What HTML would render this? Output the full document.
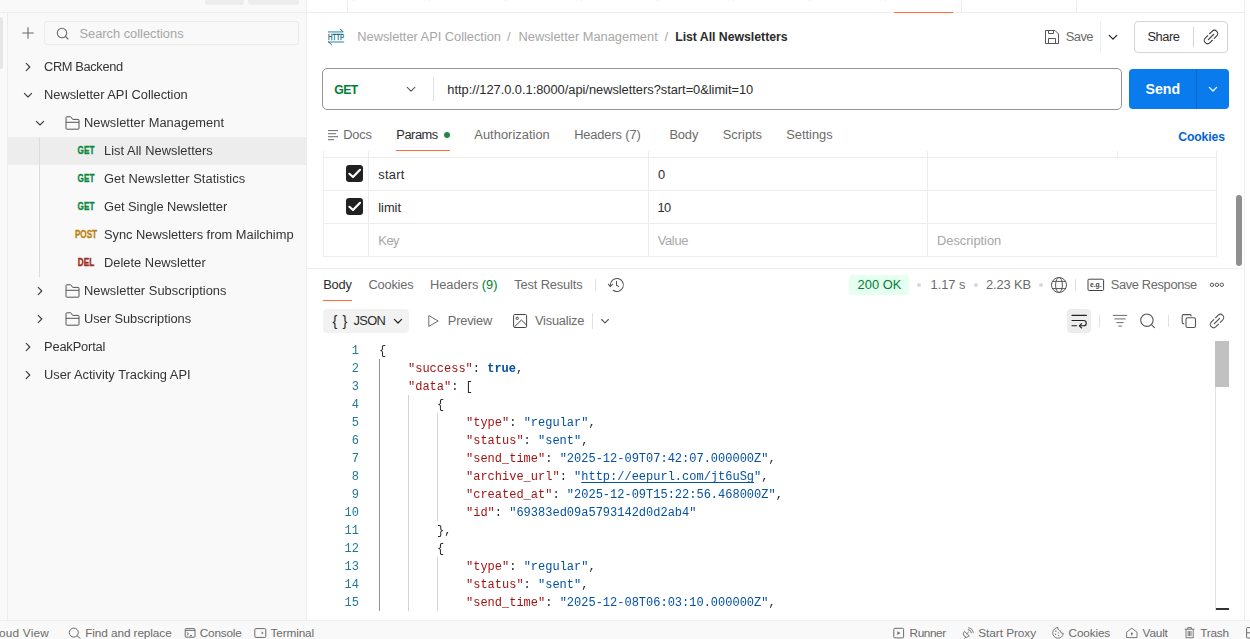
<!DOCTYPE html>
<html><head><meta charset="utf-8"><title>Postman</title>
<style>
*{box-sizing:border-box;margin:0;padding:0}
html,body{width:1250px;height:639px;overflow:hidden;background:#fff}
body{font-family:"Liberation Sans",sans-serif;font-size:12.85px;color:#2b2b2b;position:relative}
.a{position:absolute}
.t{position:absolute;white-space:pre;line-height:16px;height:16px}
.sr{color:#333;will-change:transform}
.g{color:#6b6b6b}
.ph{color:#a6a6a6}
svg{position:absolute;overflow:visible}
.ic{fill:none;stroke:#6b6b6b;stroke-width:1;stroke-linecap:round;stroke-linejoin:round}
.m{font-weight:700;font-size:10.2px;text-align:center;width:30px;left:71px;transform:scaleX(.8);-webkit-text-stroke:.35px currentColor}
.code{font-family:"Liberation Mono",monospace;font-size:12px}
.code .t{line-height:18px;height:18px;will-change:transform}
.k{color:#a31515}.s{color:#0451a5}.ln{color:#237893;text-align:right;width:30px;left:328px}
.sb .t{font-size:11.8px;color:#6b6b6b}
</style></head><body>
<!-- SIDEBAR -->
<div class="a side" style="left:0;top:0;width:307px;height:621px;background:#f9f9f9;border-right:1px solid #ededed"></div>
<div class="a" style="left:7px;top:12px;width:1px;height:609px;background:#ededed"></div>
<div class="a" style="left:0;top:12px;width:1245px;height:1px;background:#ededed"></div>
<div class="a" style="left:0;top:17px;width:3px;height:52px;background:#e6e6e6;border-radius:0 3px 3px 0"></div>
<div class="a" style="left:205px;top:0;width:39px;height:5px;background:#ededed;border-radius:0 0 3px 3px"></div>
<div class="a" style="left:248px;top:0;width:51px;height:5px;background:#ededed;border-radius:0 0 3px 3px"></div>
<svg style="left:22px;top:27px" width="12" height="12" viewBox="0 0 12 12" ><path d="M6 .3V11.7M.3 6H11.7" stroke="#6b6b6b" stroke-width="1.1" fill="none"/></svg>
<div class="a" style="left:44px;top:21px;width:255px;height:24px;border:1px solid #ebebeb;border-radius:3px;background:#f9f9f9"></div>
<svg style="left:56px;top:27px" width="13" height="13" viewBox="0 0 13 13" ><circle cx="6" cy="6" r="4.7" fill="none" stroke="#6b6b6b" stroke-width="1.1"/><path d="M9.5 9.5 L12 12" stroke="#6b6b6b" stroke-width="1.1" stroke-linecap="round"/></svg>
<div class="t ph" style="left:79.5px;top:25.6px;letter-spacing:-0.01px">Search collections</div>
<div class="a" style="left:8px;top:137px;width:298px;height:28px;background:#ededed"></div>
<div class="a" style="left:39px;top:137px;width:1px;height:140px;background:#dcdcdc"></div>
<svg style="left:20px;top:59px" width="16" height="16" viewBox="0 0 16 16" ><path d="M6.2 4.4 L9.8 8 L6.2 11.6" fill="none" stroke="#3b3b3b" stroke-width="1.1" stroke-linecap="round" stroke-linejoin="round"/></svg>
<div class="t sr" style="left:44.3px;top:59.0px;letter-spacing:-0.37px">CRM Backend</div>
<svg style="left:20px;top:87px" width="16" height="16" viewBox="0 0 16 16" ><path d="M4.4 6.4 L8 10.0 L11.6 6.4" fill="none" stroke="#3b3b3b" stroke-width="1.1" stroke-linecap="round" stroke-linejoin="round"/></svg>
<div class="t sr" style="left:44.3px;top:87.0px;letter-spacing:-0.02px">Newsletter API Collection</div>
<svg style="left:32px;top:115px" width="16" height="16" viewBox="0 0 16 16" ><path d="M4.4 6.4 L8 10.0 L11.6 6.4" fill="none" stroke="#3b3b3b" stroke-width="1.1" stroke-linecap="round" stroke-linejoin="round"/></svg>
<svg style="left:64.5px;top:116px" width="15" height="14" viewBox="0 0 15 14" ><path d="M1 12.5 V1.5 Q1 .8 1.7 .8 H5.6 Q6.1 .8 6.4 1.3 L7.3 3 Q7.5 3.4 8 3.4 H13.3 Q14 3.4 14 4.1 V12.5 Q14 13.2 13.3 13.2 H1.7 Q1 13.2 1 12.5 Z M1 6.3 H14" fill="none" stroke="#555" stroke-width="1" stroke-linejoin="round"/></svg>
<div class="t sr" style="left:84px;top:115.0px;letter-spacing:0.04px">Newsletter Management</div>
<div class="t m" style="left:71px;top:143.0px;color:#0a8a3c;">GET</div>
<div class="t sr" style="left:104.3px;top:143.0px;letter-spacing:0.05px">List All Newsletters</div>
<div class="t m" style="left:71px;top:171.0px;color:#0a8a3c;">GET</div>
<div class="t sr" style="left:104.3px;top:171.0px;letter-spacing:0.05px">Get Newsletter Statistics</div>
<div class="t m" style="left:71px;top:199.0px;color:#0a8a3c;">GET</div>
<div class="t sr" style="left:104.3px;top:199.0px;letter-spacing:-0.05px">Get Single Newsletter</div>
<div class="t m" style="left:71px;top:227.0px;color:#bd8210;">POST</div>
<div class="t sr" style="left:104.3px;top:227.0px;letter-spacing:-0.01px">Sync Newsletters from Mailchimp</div>
<div class="t m" style="left:71px;top:255.0px;color:#a02a22;">DEL</div>
<div class="t sr" style="left:104.3px;top:255.0px;letter-spacing:0.02px">Delete Newsletter</div>
<svg style="left:32px;top:283px" width="16" height="16" viewBox="0 0 16 16" ><path d="M6.2 4.4 L9.8 8 L6.2 11.6" fill="none" stroke="#3b3b3b" stroke-width="1.1" stroke-linecap="round" stroke-linejoin="round"/></svg>
<svg style="left:64.5px;top:284px" width="15" height="14" viewBox="0 0 15 14" ><path d="M1 12.5 V1.5 Q1 .8 1.7 .8 H5.6 Q6.1 .8 6.4 1.3 L7.3 3 Q7.5 3.4 8 3.4 H13.3 Q14 3.4 14 4.1 V12.5 Q14 13.2 13.3 13.2 H1.7 Q1 13.2 1 12.5 Z M1 6.3 H14" fill="none" stroke="#555" stroke-width="1" stroke-linejoin="round"/></svg>
<div class="t sr" style="left:84px;top:283.0px;letter-spacing:0.05px">Newsletter Subscriptions</div>
<svg style="left:32px;top:311px" width="16" height="16" viewBox="0 0 16 16" ><path d="M6.2 4.4 L9.8 8 L6.2 11.6" fill="none" stroke="#3b3b3b" stroke-width="1.1" stroke-linecap="round" stroke-linejoin="round"/></svg>
<svg style="left:64.5px;top:312px" width="15" height="14" viewBox="0 0 15 14" ><path d="M1 12.5 V1.5 Q1 .8 1.7 .8 H5.6 Q6.1 .8 6.4 1.3 L7.3 3 Q7.5 3.4 8 3.4 H13.3 Q14 3.4 14 4.1 V12.5 Q14 13.2 13.3 13.2 H1.7 Q1 13.2 1 12.5 Z M1 6.3 H14" fill="none" stroke="#555" stroke-width="1" stroke-linejoin="round"/></svg>
<div class="t sr" style="left:84px;top:311.0px;letter-spacing:-0.04px">User Subscriptions</div>
<svg style="left:20px;top:339px" width="16" height="16" viewBox="0 0 16 16" ><path d="M6.2 4.4 L9.8 8 L6.2 11.6" fill="none" stroke="#3b3b3b" stroke-width="1.1" stroke-linecap="round" stroke-linejoin="round"/></svg>
<div class="t sr" style="left:44.3px;top:339.0px;letter-spacing:-0.16px">PeakPortal</div>
<svg style="left:20px;top:367px" width="16" height="16" viewBox="0 0 16 16" ><path d="M6.2 4.4 L9.8 8 L6.2 11.6" fill="none" stroke="#3b3b3b" stroke-width="1.1" stroke-linecap="round" stroke-linejoin="round"/></svg>
<div class="t sr" style="left:44.3px;top:367.0px;letter-spacing:0.01px">User Activity Tracking API</div>

<!-- MAIN -->
<div class="a" style="left:347px;top:0px;width:1px;height:12px;background:#ededed"></div>
<div class="a" style="left:353px;top:0px;width:1px;height:1px;background:#e6e6e6"></div>
<div class="a" style="left:429px;top:0px;width:1px;height:1px;background:#e6e6e6"></div>
<div class="a" style="left:505px;top:0px;width:1px;height:1px;background:#e6e6e6"></div>
<div class="a" style="left:581px;top:0px;width:1px;height:1px;background:#e6e6e6"></div>
<div class="a" style="left:657px;top:0px;width:1px;height:1px;background:#e6e6e6"></div>
<div class="a" style="left:733px;top:0px;width:1px;height:1px;background:#e6e6e6"></div>
<div class="a" style="left:809px;top:0px;width:1px;height:1px;background:#e6e6e6"></div>
<div class="a" style="left:885px;top:0px;width:1px;height:1px;background:#e6e6e6"></div>
<div class="a" style="left:961px;top:0px;width:1px;height:12px;background:#ededed"></div>
<div class="a" style="left:1076px;top:0px;width:1px;height:12px;background:#ededed"></div>
<div class="a" style="left:894px;top:12px;width:59px;height:1px;background:#ff6c37"></div>
<div class="a" style="left:1244px;top:0px;width:1px;height:620px;background:#ededed"></div>
<svg style="left:327px;top:28px" width="19" height="18" viewBox="0 0 19 18" ><g fill="none" stroke="#7bbac3" stroke-width="1.7"><path d="M1 3.9 H16.2"/><path d="M17.2 14 H1"/></g><g fill="none" stroke="#1a6a94" stroke-width="1" stroke-linecap="round"><path d="M13.3 1.1 L16 3.8"/><path d="M1.6 13.9 L4.6 16.8"/></g><text x="1" y="11.9" font-family="Liberation Sans, sans-serif" font-size="8.6" font-weight="400" fill="#0d5f8c" stroke="#0d5f8c" stroke-width=".3" textLength="16.2" lengthAdjust="spacingAndGlyphs">HTTP</text></svg>
<div class="t " style="left:357.3px;top:29.0px;color:#a6a6a6;letter-spacing:-0.02px">Newsletter API Collection</div>
<div class="t " style="left:507px;top:29.0px;color:#a6a6a6;">/</div>
<div class="t " style="left:518.5px;top:29.0px;color:#a6a6a6;letter-spacing:0.00px">Newsletter Management</div>
<div class="t " style="left:664.5px;top:29.0px;color:#a6a6a6;">/</div>
<div class="t " style="left:675.2px;top:29.0px;font-weight:700;font-size:12.3px;letter-spacing:-0.03px">List All Newsletters</div>
<svg style="left:1044px;top:29px" width="16" height="16" viewBox="0 0 16 16" ><path d="M1.5 1.5 H11 L14.5 5 V14.5 H1.5 Z M4.5 1.5 V4.5 H9.5 V1.5 M4.5 14.5 V9.5 H11.5 V14.5" fill="none" stroke="#555" stroke-width="1" stroke-linejoin="round"/></svg>
<div class="t g" style="left:1065.7px;top:29.0px;letter-spacing:-0.50px">Save</div>
<div class="a" style="left:1100px;top:21px;width:1px;height:32px;background:#ededed"></div>
<svg style="left:1104.8px;top:29px" width="16" height="16" viewBox="0 0 16 16" ><path d="M4.2 6.3 L8 10.1 L11.8 6.3" fill="none" stroke="#212121" stroke-width="1.2" stroke-linecap="round" stroke-linejoin="round"/></svg>
<div class="a" style="left:1134px;top:21px;width:94px;height:32px;border:1px solid #d4d4d4;border-radius:4px;background:#fff"></div>
<div class="t " style="left:1147.5px;top:29.0px;letter-spacing:-0.46px">Share</div>
<div class="a" style="left:1193px;top:27px;width:1px;height:20px;background:#d4d4d4"></div>
<svg style="left:1202px;top:28px" width="18" height="18" viewBox="0 0 18 18" ><g transform="translate(9 9) rotate(-45)" fill="none" stroke="#3b3b3b" stroke-width="1.1" stroke-linecap="round"><path d="M1.3 -3.3 H4.8 A3.3 3.3 0 0 1 4.8 3.3 H1.3 M-1.3 3.3 H-4.8 A3.3 3.3 0 0 1 -4.8 -3.3 H-1.3"/><path d="M-3.7 0 H3.7" stroke-width="1.3"/></g></svg>
<div class="a" style="left:322px;top:68px;width:800px;height:42px;border:1px solid #949494;border-radius:5px;background:#fff"></div>
<div class="t " style="left:334.3px;top:82.0px;font-weight:700;font-size:12.2px;color:#007f31;letter-spacing:-0.52px">GET</div>
<svg style="left:403.2px;top:81.3px" width="16" height="16" viewBox="0 0 16 16" ><path d="M4.1 6.25 L8 10.149999999999999 L11.9 6.25" fill="none" stroke="#4a4a4a" stroke-width="1.05" stroke-linecap="round" stroke-linejoin="round"/></svg>
<div class="a" style="left:433px;top:77px;width:1px;height:24px;background:#e0e0e0"></div>
<div class="t " style="left:447.3px;top:82.0px;letter-spacing:-0.02px">http://127.0.0.1:8000/api/newsletters?start=0&amp;limit=10</div>
<div class="a" style="left:1129px;top:69px;width:100px;height:40px;background:#097bed;border-radius:4px"></div>
<div class="a" style="left:1196px;top:69px;width:1px;height:40px;background:#0a68c9"></div>
<div class="t " style="left:1145.6px;top:81.0px;font-weight:700;font-size:14.2px;color:#fff;letter-spacing:-0.07px">Send</div>
<svg style="left:1205px;top:81.3px" width="16" height="16" viewBox="0 0 16 16" ><path d="M4.4 6.4 L8 10.0 L11.6 6.4" fill="none" stroke="#fff" stroke-width="1.3" stroke-linecap="round" stroke-linejoin="round"/></svg>
<svg style="left:327px;top:129px" width="12" height="12" viewBox="0 0 12 12" ><path d="M1 1.6 H11 M1 4.7 H9 M1 7.7 H11 M1 10.7 H7" stroke="#6b6b6b" stroke-width="1" fill="none"/></svg>
<div class="t g" style="left:343.3px;top:127.0px;letter-spacing:-0.24px">Docs</div>
<div class="t " style="left:396.3px;top:127.0px;letter-spacing:-0.46px">Params</div>
<div class="a" style="left:443.8px;top:132px;width:6px;height:6px;background:#1f8a48;border-radius:3px"></div>
<div class="a" style="left:396px;top:149.5px;width:54px;height:1.5px;background:#ff6c37"></div>
<div class="t g" style="left:474.3px;top:127.0px;letter-spacing:0.04px">Authorization</div>
<div class="t g" style="left:574.2px;top:127.0px;letter-spacing:-0.13px">Headers (7)</div>
<div class="t g" style="left:669.4px;top:127.0px;letter-spacing:-0.12px">Body</div>
<div class="t g" style="left:722.8px;top:127.0px;letter-spacing:-0.01px">Scripts</div>
<div class="t g" style="left:786.2px;top:127.0px;letter-spacing:-0.00px">Settings</div>
<div class="t " style="left:1178.2px;top:129.0px;font-weight:700;font-size:12.2px;color:#0265d2;letter-spacing:-0.09px">Cookies</div>
<div class="a" style="left:323px;top:151px;width:1px;height:106px;background:#ededed"></div>
<div class="a" style="left:368px;top:151px;width:1px;height:106px;background:#ededed"></div>
<div class="a" style="left:648px;top:151px;width:1px;height:106px;background:#ededed"></div>
<div class="a" style="left:927px;top:151px;width:1px;height:106px;background:#ededed"></div>
<div class="a" style="left:1117px;top:151px;width:1px;height:6px;background:#ededed"></div>
<div class="a" style="left:1216px;top:151px;width:1px;height:106px;background:#ededed"></div>
<div class="a" style="left:323px;top:157px;width:894px;height:1px;background:#ededed"></div>
<div class="a" style="left:323px;top:190px;width:894px;height:1px;background:#ededed"></div>
<div class="a" style="left:323px;top:223px;width:894px;height:1px;background:#ededed"></div>
<div class="a" style="left:323px;top:256px;width:894px;height:1px;background:#ededed"></div>
<svg style="left:346.0px;top:165.0px" width="17" height="17" viewBox="0 0 17 17" ><rect x="0" y="0" width="17" height="17" rx="3.2" fill="#212121"/><path d="M3.4 8.8 L7 12 L14 4.8" fill="none" stroke="#fff" stroke-width="2.2" stroke-linecap="round" stroke-linejoin="round"/></svg>
<svg style="left:346.0px;top:198.0px" width="17" height="17" viewBox="0 0 17 17" ><rect x="0" y="0" width="17" height="17" rx="3.2" fill="#212121"/><path d="M3.4 8.8 L7 12 L14 4.8" fill="none" stroke="#fff" stroke-width="2.2" stroke-linecap="round" stroke-linejoin="round"/></svg>
<div class="t " style="left:378.3px;top:167.0px;letter-spacing:0.24px">start</div>
<div class="t " style="left:378.3px;top:200.0px;letter-spacing:-0.03px">limit</div>
<div class="t " style="left:658px;top:167.0px;">0</div>
<div class="t " style="left:657.5px;top:200.0px;letter-spacing:-0.60px">10</div>
<div class="t ph" style="left:378.3px;top:233.0px;letter-spacing:-0.48px">Key</div>
<div class="t ph" style="left:657.8px;top:233.0px;letter-spacing:-0.34px">Value</div>
<div class="t ph" style="left:937px;top:233.0px;letter-spacing:-0.00px">Description</div>
<div class="a" style="left:1236px;top:195px;width:6px;height:71px;background:#8f8f8f;border-radius:3px"></div>
<div class="a" style="left:307px;top:268px;width:937px;height:1px;background:#ededed"></div>
<div class="t " style="left:323.2px;top:276.6px;letter-spacing:-0.17px">Body</div>
<div class="a" style="left:323px;top:299.5px;width:29px;height:1.5px;background:#ff6c37"></div>
<div class="t g" style="left:368.4px;top:276.6px;letter-spacing:-0.19px">Cookies</div>
<div class="t g" style="left:430px;top:276.6px;letter-spacing:-0.04px">Headers <span style="color:#007f31">(9)</span></div>
<div class="t g" style="left:514.3px;top:276.6px;letter-spacing:-0.15px">Test Results</div>
<div class="a" style="left:595px;top:279px;width:1px;height:12px;background:#e0e0e0"></div>
<svg style="left:608px;top:277px" width="17" height="16" viewBox="0 0 17 16" ><g fill="none" stroke="#555" stroke-width="1.05" stroke-linecap="round" stroke-linejoin="round"><path d="M2.4 8.4 A6.5 6.5 0 1 1 5.2 13.3"/><path d="M.4 7.2 L2.3 9.6 L4.5 7.2"/><path d="M8.5 4.3 V8.3 L10.8 9.6"/></g></svg>
<div class="a" style="left:848.5px;top:275px;width:60.5px;height:20px;background:#e5fff1;border-radius:3px"></div>
<div class="t " style="left:857.6px;top:276.6px;font-size:12.9px;color:#007f31;letter-spacing:-0.00px">200 OK</div>
<div class="a" style="left:917.3px;top:283.2px;width:3.4px;height:3.4px;background:#d9d9d9;border-radius:2px"></div>
<div class="a" style="left:974.3px;top:283.2px;width:3.4px;height:3.4px;background:#d9d9d9;border-radius:2px"></div>
<div class="a" style="left:1039.3px;top:283.2px;width:3.4px;height:3.4px;background:#d9d9d9;border-radius:2px"></div>
<div class="t g" style="left:930.5px;top:276.6px;letter-spacing:0.00px">1.17 s</div>
<div class="t g" style="left:986px;top:276.6px;letter-spacing:-0.10px">2.23 KB</div>
<svg style="left:1050px;top:276px" width="18" height="18" viewBox="0 0 18 18" ><g fill="none" stroke="#555" stroke-width="1"><circle cx="9" cy="9" r="7.5"/><ellipse cx="9" cy="9" rx="3.4" ry="7.5"/><path d="M2.6 5.4 H15.4 M2.6 12.6 H15.4"/></g></svg>
<div class="a" style="left:1075px;top:279px;width:1px;height:12px;background:#e0e0e0"></div>
<svg style="left:1087px;top:278px" width="18" height="14" viewBox="0 0 18 14" ><rect x="1" y="1.2" width="15.6" height="11.3" rx="1" fill="none" stroke="#444" stroke-width="1"/><text x="3" y="9.4" font-family="Liberation Sans, sans-serif" font-size="6.6" font-weight="700" fill="#444" textLength="11.6" lengthAdjust="spacingAndGlyphs">e.g.</text></svg>
<div class="t g" style="left:1110.8px;top:276.6px;letter-spacing:-0.36px">Save Response</div>
<svg style="left:1208px;top:281px" width="18" height="8" viewBox="0 0 18 8" ><g fill="none" stroke="#555" stroke-width="1"><circle cx="4" cy="3.8" r="1.7"/><circle cx="8.9" cy="3.8" r="1.7"/><circle cx="13.8" cy="3.8" r="1.7"/></g></svg>
<div class="a" style="left:323px;top:309px;width:86px;height:24px;background:#f2f2f2;border-radius:4px"></div>
<div class="t " style="left:332.4px;top:313.0px;font-size:14.5px;letter-spacing:0.56px">{ }</div>
<div class="t " style="left:353.4px;top:313.0px;letter-spacing:-0.60px">JSON</div>
<svg style="left:389.5px;top:312.8px" width="16" height="16" viewBox="0 0 16 16" ><path d="M4.4 6.4 L8 10.0 L11.6 6.4" fill="none" stroke="#212121" stroke-width="1.2" stroke-linecap="round" stroke-linejoin="round"/></svg>
<svg style="left:427px;top:314px" width="13" height="14" viewBox="0 0 13 14" ><path d="M1.8 1.6 L11.2 7 L1.8 12.4 Z" fill="none" stroke="#6b6b6b" stroke-width="1" stroke-linejoin="round"/></svg>
<div class="t g" style="left:447.8px;top:313.0px;letter-spacing:-0.21px">Preview</div>
<svg style="left:512px;top:313px" width="16" height="16" viewBox="0 0 16 16" ><g fill="none" stroke="#444" stroke-width="1" stroke-linejoin="round"><rect x="1.6" y="1.5" width="13" height="13" rx="1.2"/><circle cx="5.2" cy="5.3" r="1.2"/><path d="M2.4 13.9 L9.4 7 L14.6 12.2"/></g></svg>
<div class="t g" style="left:535px;top:313.0px;letter-spacing:-0.22px">Visualize</div>
<div class="a" style="left:592px;top:313px;width:1px;height:16px;background:#e0e0e0"></div>
<svg style="left:596.8px;top:312.8px" width="16" height="16" viewBox="0 0 16 16" ><path d="M4.6 6.5 L8 9.899999999999999 L11.4 6.5" fill="none" stroke="#555" stroke-width="1.1" stroke-linecap="round" stroke-linejoin="round"/></svg>
<div class="a" style="left:1067px;top:309px;width:24px;height:24px;background:#ededed;border-radius:4px"></div>
<svg style="left:1070px;top:312px" width="18" height="18" viewBox="0 0 18 18" ><g fill="none" stroke="#212121" stroke-width="1.1" stroke-linecap="round" stroke-linejoin="round"><path d="M2 3.4 H16.4"/><path d="M2 8.5 H13.6 A2.6 2.6 0 0 1 13.6 13.8 H9.6"/><path d="M11.6 11.6 L9.4 13.8 L11.6 16"/><path d="M2 13.8 H6.6"/></g></svg>
<div class="a" style="left:1099px;top:315px;width:1px;height:12px;background:#e0e0e0"></div>
<svg style="left:1112px;top:312px" width="16" height="16" viewBox="0 0 16 16" ><path d="M.8 3.4 H15.2 M2.4 6.9 H13.6 M4.5 10.6 H11.5 M6.4 14.1 H9.9" stroke="#6b6b6b" stroke-width="1" fill="none"/></svg>
<svg style="left:1139px;top:312px" width="18" height="18" viewBox="0 0 18 18" ><circle cx="7.9" cy="8.2" r="6.2" fill="none" stroke="#555" stroke-width="1.1"/><path d="M12.4 12.7 L15.4 15.6" stroke="#555" stroke-width="1.1" stroke-linecap="round"/></svg>
<div class="a" style="left:1168px;top:315px;width:1px;height:12px;background:#e0e0e0"></div>
<svg style="left:1181px;top:313px" width="16" height="16" viewBox="0 0 16 16" ><g fill="none" stroke="#555" stroke-width="1.1" stroke-linejoin="round"><rect x="5" y="4.8" width="9.5" height="9.7" rx="1.6"/><path d="M3.2 10.6 H2.6 Q1.2 10.6 1.2 9.2 V3 Q1.2 1.6 2.6 1.6 H8.8 Q10.2 1.6 10.2 3 V3.2"/></g></svg>
<svg style="left:1208px;top:312px" width="18" height="18" viewBox="0 0 18 18" ><g transform="translate(9 9) rotate(-45)" fill="none" stroke="#555" stroke-width="1.1" stroke-linecap="round"><path d="M1.3 -3.3 H4.8 A3.3 3.3 0 0 1 4.8 3.3 H1.3 M-1.3 3.3 H-4.8 A3.3 3.3 0 0 1 -4.8 -3.3 H-1.3"/><path d="M-3.7 0 H3.7" stroke-width="1.3"/></g></svg>
<div class="code">
<div class="a" style="left:379px;top:359px;width:1px;height:252px;background:#939393"></div>
<div class="a" style="left:408px;top:395px;width:1px;height:216px;background:#d3d3d3"></div>
<div class="a" style="left:437px;top:413px;width:1px;height:108px;background:#d3d3d3"></div>
<div class="a" style="left:437px;top:557px;width:1px;height:54px;background:#d3d3d3"></div>
<div class="t ln" style="left:328.6px;top:342.0px;">1</div>
<div class="t " style="left:379.3px;top:342.0px;">{</div>
<div class="t ln" style="left:328.6px;top:360.0px;">2</div>
<div class="t " style="left:408.1px;top:360.0px;"><span class="k">&quot;success&quot;</span>: <span class="s" style="font-weight:700">true</span>,</div>
<div class="t ln" style="left:328.6px;top:378.0px;">3</div>
<div class="t " style="left:408.1px;top:378.0px;"><span class="k">&quot;data&quot;</span>: [</div>
<div class="t ln" style="left:328.6px;top:396.0px;">4</div>
<div class="t " style="left:436.90000000000003px;top:396.0px;">{</div>
<div class="t ln" style="left:328.6px;top:414.0px;">5</div>
<div class="t " style="left:465.70000000000005px;top:414.0px;"><span class="k">&quot;type&quot;</span>: <span class="s">&quot;regular&quot;</span>,</div>
<div class="t ln" style="left:328.6px;top:432.0px;">6</div>
<div class="t " style="left:465.70000000000005px;top:432.0px;"><span class="k">&quot;status&quot;</span>: <span class="s">&quot;sent&quot;</span>,</div>
<div class="t ln" style="left:328.6px;top:450.0px;">7</div>
<div class="t " style="left:465.70000000000005px;top:450.0px;"><span class="k">&quot;send_time&quot;</span>: <span class="s">&quot;2025-12-09T07:42:07.000000Z&quot;</span>,</div>
<div class="t ln" style="left:328.6px;top:468.0px;">8</div>
<div class="t " style="left:465.70000000000005px;top:468.0px;"><span class="k">&quot;archive_url&quot;</span>: <span class="s">&quot;<span style="text-decoration:underline;text-underline-offset:2px">http://eepurl.com/jt6uSg</span>&quot;</span>,</div>
<div class="t ln" style="left:328.6px;top:486.0px;">9</div>
<div class="t " style="left:465.70000000000005px;top:486.0px;"><span class="k">&quot;created_at&quot;</span>: <span class="s">&quot;2025-12-09T15:22:56.468000Z&quot;</span>,</div>
<div class="t ln" style="left:328.6px;top:504.0px;">10</div>
<div class="t " style="left:465.70000000000005px;top:504.0px;"><span class="k">&quot;id&quot;</span>: <span class="s">&quot;69383ed09a5793142d0d2ab4&quot;</span></div>
<div class="t ln" style="left:328.6px;top:522.0px;">11</div>
<div class="t " style="left:436.90000000000003px;top:522.0px;">},</div>
<div class="t ln" style="left:328.6px;top:540.0px;">12</div>
<div class="t " style="left:436.90000000000003px;top:540.0px;">{</div>
<div class="t ln" style="left:328.6px;top:558.0px;">13</div>
<div class="t " style="left:465.70000000000005px;top:558.0px;"><span class="k">&quot;type&quot;</span>: <span class="s">&quot;regular&quot;</span>,</div>
<div class="t ln" style="left:328.6px;top:576.0px;">14</div>
<div class="t " style="left:465.70000000000005px;top:576.0px;"><span class="k">&quot;status&quot;</span>: <span class="s">&quot;sent&quot;</span>,</div>
<div class="t ln" style="left:328.6px;top:594.0px;">15</div>
<div class="t " style="left:465.70000000000005px;top:594.0px;"><span class="k">&quot;send_time&quot;</span>: <span class="s">&quot;2025-12-08T06:03:10.000000Z&quot;</span>,</div>
</div>
<div class="a" style="left:1215px;top:341px;width:1px;height:270px;background:#e0e0e0"></div>
<div class="a" style="left:1215px;top:341px;width:14px;height:46px;background:#c1c1c1"></div>
<div class="a" style="left:1216px;top:608px;width:13px;height:2px;background:#333"></div>

<!-- STATUS BAR -->
<div class="a sb" style="left:0;top:620px;width:1250px;height:19px;background:#f9f9f9;border-top:1px solid #ededed"></div>
<div class="sb">
<div class="t sbt" style="left:-12.6px;top:624.5px;letter-spacing:0.21px">Cloud View</div>
<svg style="left:68px;top:627px" width="14" height="13" viewBox="0 0 14 13" ><circle cx="5.8" cy="5.6" r="4.5" fill="none" stroke="#6b6b6b" stroke-width="1"/><path d="M9.1 8.9 L12 11.2" stroke="#6b6b6b" stroke-width="1" stroke-linecap="round"/></svg>
<div class="t sbt" style="left:85.2px;top:624.5px;letter-spacing:-0.09px">Find and replace</div>
<svg style="left:184px;top:627px" width="13" height="12" viewBox="0 0 13 12" ><g fill="none" stroke="#6b6b6b" stroke-width="1"><rect x="1.2" y="1.6" width="9.8" height="8.6" rx=".8"/><path d="M1.2 3.4 H11 M2.8 5.4 L4.6 6.9 L2.8 8.4 M5.8 8.6 H8"/></g></svg>
<div class="t sbt" style="left:199.8px;top:624.5px;letter-spacing:-0.21px">Console</div>
<svg style="left:254px;top:627px" width="13" height="12" viewBox="0 0 13 12" ><g fill="none" stroke="#6b6b6b" stroke-width="1"><rect x=".8" y="1.6" width="11" height="8.8" rx="1"/></g><path d="M7.6 4.4 L9.6 6 L7.6 7.6 Z" fill="#6b6b6b"/></svg>
<div class="t sbt" style="left:270.6px;top:624.5px;letter-spacing:-0.15px">Terminal</div>
<svg style="left:893px;top:627px" width="12" height="12" viewBox="0 0 12 12" ><g fill="none" stroke="#6b6b6b" stroke-width="1"><rect x=".8" y="1.3" width="9.8" height="9.6" rx="1"/></g><path d="M4.4 4.2 L7.4 6.1 L4.4 8 Z" fill="#6b6b6b"/></svg>
<div class="t sbt" style="left:909.6px;top:624.5px;letter-spacing:-0.43px">Runner</div>
<svg style="left:962px;top:627px" width="13" height="12" viewBox="0 0 13 12" ><g fill="none" stroke="#6b6b6b" stroke-width=".9" stroke-linecap="round"><path d="M2.2 4.6 A3.3 3.3 0 1 0 7 9.2 Z"/><path d="M4.8 6.8 L6.6 5 M6.2 2.6 A3.4 3.4 0 0 1 9.4 5.8 M6.6 .8 A5.2 5.2 0 0 1 11.2 5.4 M3.6 10.2 L2.8 11.4"/></g></svg>
<div class="t sbt" style="left:978.3px;top:624.5px;letter-spacing:-0.06px">Start Proxy</div>
<svg style="left:1052px;top:627px" width="13" height="12" viewBox="0 0 13 12" ><g fill="none" stroke="#6b6b6b" stroke-width=".9"><path d="M6 .6 A5.3 5.3 0 1 0 11.3 6.4 A2.4 2.4 0 0 1 8.6 3.9 A2.6 2.6 0 0 1 6 .6 Z"/></g><g fill="#6b6b6b"><circle cx="3.9" cy="4.3" r=".7"/><circle cx="3.6" cy="7.4" r=".7"/><circle cx="6.6" cy="8.6" r=".7"/><circle cx="6.3" cy="5.8" r=".6"/></g></svg>
<div class="t sbt" style="left:1068.6px;top:624.5px;letter-spacing:-0.17px">Cookies</div>
<svg style="left:1125px;top:627px" width="13" height="12" viewBox="0 0 13 12" ><g fill="none" stroke="#6b6b6b" stroke-width=".9" stroke-linejoin="round"><path d="M1.6 10.6 V5.2 L6.8 1.2 L12 5.2 V10.6 Z"/></g><circle cx="6.8" cy="6.6" r="1" fill="#6b6b6b"/><path d="M6.8 7 V8.6" stroke="#6b6b6b" stroke-width=".9"/></svg>
<div class="t sbt" style="left:1142.6px;top:624.5px;letter-spacing:-0.18px">Vault</div>
<svg style="left:1184px;top:627px" width="12" height="12" viewBox="0 0 12 12" ><g fill="none" stroke="#6b6b6b" stroke-width=".9"><path d="M.8 2.2 H10.4 M3.8 2.2 V.6 H7.4 V2.2 M2 2.2 V10.8 H9.2 V2.2 M4.2 4 V9.2 M5.6 4 V9.2 M7 4 V9.2"/></g></svg>
<div class="t sbt" style="left:1200.3px;top:624.5px;letter-spacing:-0.26px">Trash</div>
<svg style="left:1246px;top:627px" width="12" height="12" viewBox="0 0 12 12" ><g fill="none" stroke="#6b6b6b" stroke-width="1"><rect x=".6" y=".6" width="10.4" height="10.4" rx="1"/><path d="M.6 5.8 H6"/></g></svg>
</div>

</body></html>
